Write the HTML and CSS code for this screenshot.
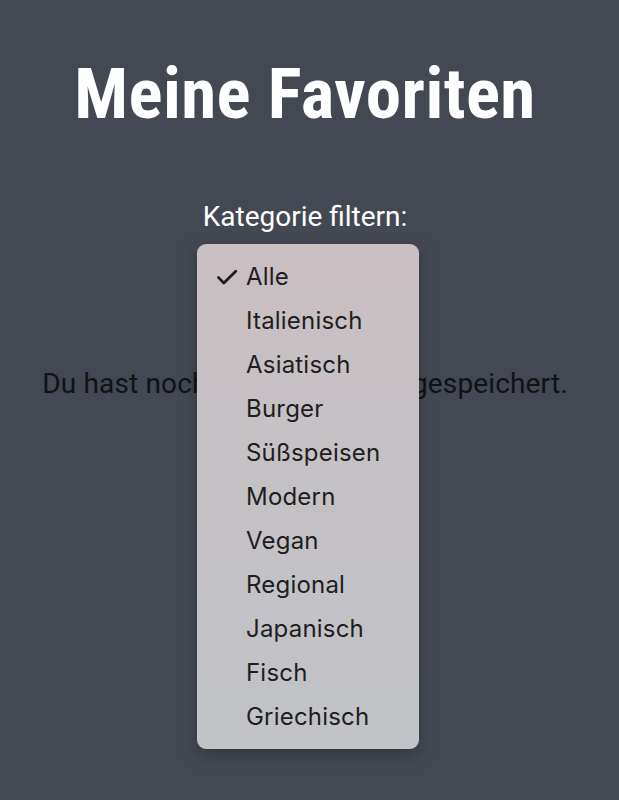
FILE: index.html
```html
<!DOCTYPE html>
<html lang="de">
<head>
<meta charset="utf-8">
<title>Meine Favoriten</title>
<link rel="stylesheet" href="styles.css">
</head>
<body>
<main class="page">
  <h1 class="title">Meine Favoriten</h1>
  <div class="filter">
    <label class="filter-label" for="cat">Kategorie filtern:</label>
    <div class="select-slot"></div>
  </div>
  <p class="empty">Du hast noch keine Favoriten gespeichert.</p>

  <ul class="menu" role="listbox">
    <li class="menu-item selected"><svg class="check" width="22" height="16" viewBox="0 0 22 16" aria-hidden="true"><path d="M2.4 8.4 L7.8 14 L19.8 2.2" fill="none" stroke="#1e1e20" stroke-width="2.8" stroke-linecap="round" stroke-linejoin="round"/></svg>Alle</li>
    <li class="menu-item">Italienisch</li>
    <li class="menu-item">Asiatisch</li>
    <li class="menu-item">Burger</li>
    <li class="menu-item">Süßspeisen</li>
    <li class="menu-item">Modern</li>
    <li class="menu-item">Vegan</li>
    <li class="menu-item">Regional</li>
    <li class="menu-item">Japanisch</li>
    <li class="menu-item">Fisch</li>
    <li class="menu-item">Griechisch</li>
  </ul>
</main>
</body>
</html>
```
FILE: styles.css
```css
html, body {
  margin: 0;
  padding: 0;
  background: #434852;
}

.page {
  position: relative;
  min-height: 800px;
  padding: 0 9px 0 0;
  text-align: center;
  font-family: "Roboto Condensed", Roboto, "Liberation Sans", sans-serif;
}

.title {
  margin: 0;
  padding-top: 52px;
  font-size: 71px;
  line-height: 84px;
  font-weight: 700;
  letter-spacing: 0.4px;
  color: #ffffff;
}

.filter {
  display: flex;
  flex-direction: column;
  align-items: center;
  margin-top: 64px;
}

.filter-label {
  font-family: Roboto, "Liberation Sans", sans-serif;
  font-size: 28px;
  line-height: 34px;
  color: #ffffff;
}

.select-slot {
  height: 40px;
}

.empty {
  margin: 94px 0 0;
  font-family: Roboto, "Liberation Sans", sans-serif;
  font-size: 28px;
  line-height: 32px;
  letter-spacing: 0.15px;
  color: #111214;
}

.menu {
  position: absolute;
  left: 197px;
  top: 244px;
  width: 222px;
  margin: 0;
  padding: 11px 0 10px;
  list-style: none;
  box-sizing: border-box;
  border-radius: 9px;
  background: linear-gradient(180deg, #cabfc2 0%, #c5c1c5 40%, #c1c3c7 100%);
  box-shadow: 0 6px 18px rgba(0, 0, 0, 0.25);
  text-align: left;
  font-family: Inter, "Noto Sans", sans-serif;
}

.menu-item {
  position: relative;
  height: 44px;
  line-height: 44px;
  padding-left: 49px;
  font-size: 24px;
  letter-spacing: 0.2px;
  color: #1e1e20;
}

.check {
  position: absolute;
  left: 19px;
  top: 14px;
}
```
